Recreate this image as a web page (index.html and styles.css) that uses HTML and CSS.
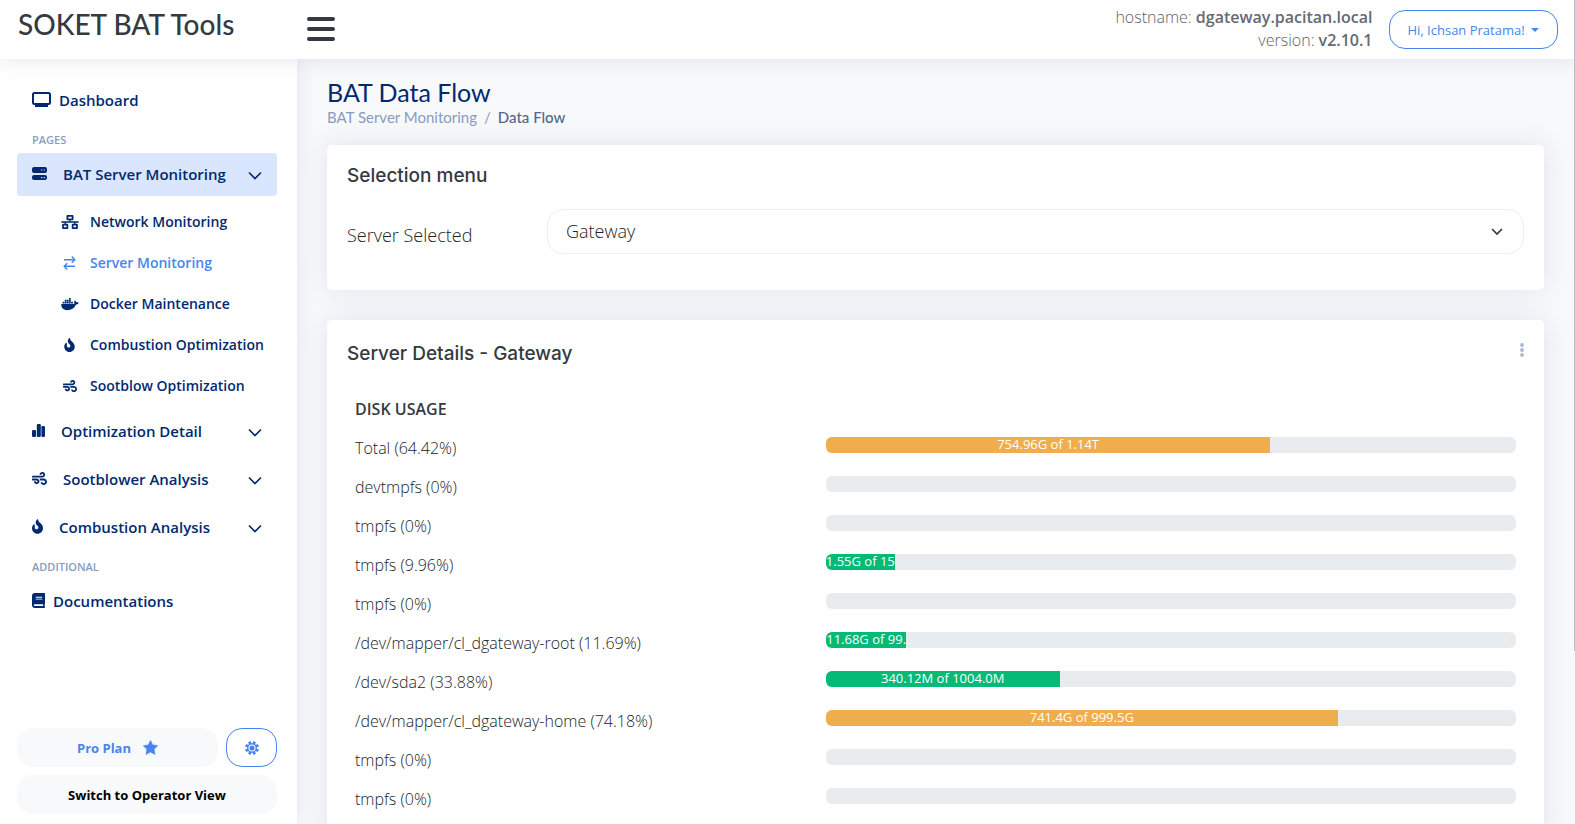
FILE: index.html
```html
<!DOCTYPE html>
<html lang="en">
<head>
<meta charset="utf-8">
<meta name="viewport" content="width=device-width, initial-scale=1">
<title>SOKET BAT Tools</title>
<link rel="stylesheet" href="styles.css">
</head>
<body>
<svg class="sprite" aria-hidden="true">
  <symbol id="chevron" viewBox="0 0 14 9"><path d="M1 1.500l6 6 6-6" fill="none" stroke="currentColor" stroke-width="1.700"/></symbol>
  <symbol id="fire" viewBox="0 0 384 512"><path d="M216 23.86c0-23.8-30.65-32.77-44.15-13.04C48 191.85 224 200 224 288c0 35.63-29.11 64.46-64.85 63.99-35.17-.45-63.15-29.77-63.15-64.94v-85.51c0-21.7-26.47-32.23-41.43-16.5C27.8 213.16 0 261.33 0 320c0 105.87 86.13 192 192 192s192-86.13 192-192c0-170.29-168-193-168-296.14z"/></symbol>
  <symbol id="wind" viewBox="0 0 512 512"><path d="M156.7 256H16c-8.8 0-16 7.2-16 16v32c0 8.8 7.2 16 16 16h142.2c15.9 0 30.8 10.9 33.4 26.6 3.3 20-12.1 37.4-31.6 37.4-14.1 0-26.1-9.2-30.4-21.9-2.1-6.3-8.6-10.1-15.2-10.1H81.6c-9.8 0-17.7 8.8-15.9 18.4 8.6 44.1 47.6 77.6 94.2 77.6 57.1 0 102.7-50.1 95.2-108.6C249 291 205.4 256 156.7 256zM16 224h336c59.7 0 106.8-54.8 93.8-116.7-7.6-36.2-36.9-65.5-73.1-73.1-55.4-11.6-105.1 24.9-114.9 75.5-1.9 9.6 6.1 18.3 15.8 18.3h32.8c6.7 0 13.1-3.8 15.2-10.1C325.9 105.2 337.9 96 352 96c19.4 0 34.9 17.4 31.6 37.4-2.6 15.7-17.4 26.6-33.4 26.6H16c-8.8 0-16 7.2-16 16v32c0 8.8 7.2 16 16 16zm384 32H243.7c19.3 16.6 33.2 38.8 39.8 64H400c26.5 0 48 21.5 48 48s-21.5 48-48 48c-17.9 0-33.3-9.9-41.6-24.4-2.9-5-8.7-7.6-14.5-7.6h-33.8c-10.9 0-19 10.8-15.3 21.1 17.8 50.6 70.5 84.8 129.4 72.3 41.2-8.7 75.1-41.6 84.7-82.7C526 321.5 470.5 256 400 256z"/></symbol>
</svg>

<header class="topbar">
  <div class="brand">SOKET BAT Tools</div>
  <button class="burger" type="button" aria-label="Toggle sidebar">
    <svg width="28" height="24" viewBox="0 0 28 24"><path d="M2 2h24M2 12h24M2 22h24" stroke="currentColor" stroke-width="4" stroke-linecap="round"/></svg>
  </button>
  <div class="host">
    <div>hostname: <b>dgateway.pacitan.local</b></div>
    <div>version: <b>v2.10.1</b></div>
  </div>
  <button class="user" type="button">Hi, Ichsan Pratama! <span class="caret"></span></button>
</header>

<div class="layout">
  <aside class="sidebar">
    <nav class="nav">
      <a class="item near" href="#"><svg width="19" height="16" viewBox="0 0 19 16"><rect x="1" y="1" width="17" height="11" rx="1.5" fill="none" stroke="currentColor" stroke-width="2"/><path d="M3 14h13" stroke="currentColor" stroke-width="2"/></svg><span>Dashboard</span></a>
      <h2 class="group">PAGES</h2>
      <a class="item active" href="#"><svg width="15" height="14" viewBox="0 0 15 14"><path fill-rule="evenodd" d="M2 0h11a2 2 0 0 1 2 2v2a2 2 0 0 1-2 2H2a2 2 0 0 1-2-2V2a2 2 0 0 1 2-2zm7 2.4v1.2h1.2V2.4zm2.6 0v1.2h1.2V2.4zM2 8h11a2 2 0 0 1 2 2v1a2 2 0 0 1-2 2H2a2 2 0 0 1-2-2v-1a2 2 0 0 1 2-2zm7 2v1.2h1.2V10zm2.6 0v1.2h1.2V10z"/></svg><span>BAT Server Monitoring</span><svg class="chev" width="14" height="9"><use href="#chevron"/></svg></a>
      <div class="sub">
        <a href="#"><i><svg width="18" height="14" viewBox="0 0 640 512"><path d="M640 264v-16c0-8.840-7.160-16-16-16H344v-40h72c17.670 0 32-14.330 32-32V32c0-17.670-14.330-32-32-32H224c-17.670 0-32 14.330-32 32v128c0 17.670 14.330 32 32 32h72v40H16c-8.840 0-16 7.160-16 16v16c0 8.840 7.160 16 16 16h104v40H64c-17.670 0-32 14.330-32 32v128c0 17.670 14.330 32 32 32h160c17.670 0 32-14.330 32-32V352c0-17.670-14.330-32-32-32h-56v-40h304v40h-56c-17.670 0-32 14.330-32 32v128c0 17.670 14.330 32 32 32h160c17.670 0 32-14.330 32-32V352c0-17.670-14.330-32-32-32h-56v-40h104c8.840 0 16-7.160 16-16zM256 128V64h128v64H256zm-64 320H96v-64h96v64zm352 0h-96v-64h96v64z"/></svg></i>Network Monitoring</a>
        <a class="current" href="#"><i><svg width="13" height="14" viewBox="0 0 13 14" fill="none" stroke="currentColor" stroke-width="1.4"><path fill="none" d="M1 3.700h11M8.800.6l3 3.100-3 3.100M12 10.300H1M4.200 7.200l-3 3.100 3 3.100"/></svg></i>Server Monitoring</a>
        <a href="#"><i><svg width="18" height="14" viewBox="0 0 640 512"><path d="M349.900 236.300h-66.100v-59.400h66.100v59.400zm0-204.300h-66.100v60.700h66.100V32zm78.200 144.800H362v59.400h66.100v-59.400zm-156.300-72.100h-66.100v60.100h66.100v-60.100zm78.100 0h-66.100v60.100h66.100v-60.100zm276.800 100c-14.400-9.700-47.600-13.200-73.100-8.400-3.300-24-16.700-44.900-41.100-63.700l-14-9.300-9.300 14c-18.400 27.800-23.400 73.600-3.700 103.800-8.700 4.700-25.800 11.100-48.400 10.700H2.400c-8.700 50.800 5.800 116.800 44 162.100 37.100 43.900 92.700 66.200 165.400 66.200 157.400 0 273.900-72.500 328.400-204.200 21.400.4 67.600.1 91.300-45.200 1.500-2.500 6.600-13.200 8.500-17.100l-13.300-8.900zm-511.100-27.900h-66v59.400h66.100v-59.400zm78.100 0h-66.100v59.400h66.100v-59.400zm78.100 0h-66.100v59.400h66.100v-59.400zm-78.100-72.100h-66.100v60.100h66.100v-60.100z"/></svg></i>Docker Maintenance</a>
        <a href="#"><i><svg width="11" height="14"><use href="#fire"/></svg></i>Combustion Optimization</a>
        <a href="#"><i><svg width="14" height="14"><use href="#wind"/></svg></i>Sootblow Optimization</a>
      </div>
      <a class="item" href="#"><svg width="13" height="14" viewBox="0 0 13 14"><rect y="6" width="4" height="7" rx="1.200"/><rect x="4.800" width="4" height="13" rx="1.200"/><rect x="9.400" y="2" width="3.600" height="11" rx="1.200"/></svg><span>Optimization Detail</span><svg class="chev" width="14" height="9"><use href="#chevron"/></svg></a>
      <a class="item" href="#"><svg width="15" height="15"><use href="#wind"/></svg><span>Sootblower Analysis</span><svg class="chev" width="14" height="9"><use href="#chevron"/></svg></a>
      <a class="item" href="#"><svg width="11" height="15"><use href="#fire"/></svg><span>Combustion Analysis</span><svg class="chev" width="14" height="9"><use href="#chevron"/></svg></a>
      <h2 class="group">ADDITIONAL</h2>
      <a class="item near" href="#"><svg width="13" height="15" viewBox="0 0 448 512"><path d="M448 360V24c0-13.300-10.700-24-24-24H96C43 0 0 43 0 96v320c0 53 43 96 96 96h328c13.300 0 24-10.700 24-24v-16c0-7.500-3.500-14.300-8.900-18.700-4.200-15.400-4.200-59.300 0-74.700 5.400-4.300 8.900-11.100 8.900-18.600zM128 134c0-3.300 2.700-6 6-6h212c3.300 0 6 2.700 6 6v20c0 3.300-2.700 6-6 6H134c-3.300 0-6-2.700-6-6v-20zm0 64c0-3.300 2.700-6 6-6h212c3.300 0 6 2.700 6 6v20c0 3.300-2.700 6-6 6H134c-3.300 0-6-2.700-6-6v-20zm253.400 250H96c-17.700 0-32-14.300-32-32 0-17.600 14.400-32 32-32h285.400c-1.900 17.100-1.900 46.900 0 64z"/></svg><span>Documentations</span></a>
    </nav>
    <div class="actions">
      <button class="pill plan" type="button">Pro Plan <svg width="15" height="15" viewBox="0 0 15 15"><path stroke="currentColor" stroke-width=".6" stroke-linejoin="round" d="M7.500.4l2.200 4.500 5 .8-3.600 3.500.9 5.200-4.500-2.400L3 14.400l.9-5.200L.3 5.700l5-.8z"/></svg></button>
      <button class="pill gear" type="button" aria-label="Settings"><svg width="14" height="14" viewBox="0 0 16 16"><g stroke="currentColor" stroke-width="3"><path d="M4.900.7l6.200 14.600M11.100.7L4.900 15.300M.7 4.900l14.600 6.200M.7 11.100l14.600-6.200"/></g><circle cx="8" cy="8" r="5.500"/><circle cx="8" cy="8" r="3.500" fill="none" stroke="#fff" stroke-width="1.200"/></svg></button>
      <button class="pill operator" type="button">Switch to Operator View</button>
    </div>
  </aside>

  <main class="main">
    <h1 class="title">BAT Data Flow</h1>
    <nav class="crumbs" aria-label="Breadcrumb"><a href="#">BAT Server Monitoring</a><span>/</span><b>Data Flow</b></nav>

    <section class="card selection">
      <h2>Selection menu</h2>
      <div class="field">
        <label for="server">Server Selected</label>
        <div class="select">
          <select id="server"><option>Gateway</option></select>
          <svg width="12" height="8" viewBox="0 0 12 8"><path d="M1.500 1.500L6 6l4.500-4.500" fill="none" stroke="#343a40" stroke-width="1.700" stroke-linecap="round"/></svg>
        </div>
      </div>
    </section>

    <section class="card details">
      <div class="card-head">
        <h2>Server Details - Gateway</h2>
        <button class="more" type="button" aria-label="More"><svg width="4" height="14" viewBox="0 0 4 14"><circle cx="2" cy="2" r="1.900"/><circle cx="2" cy="7" r="1.900"/><circle cx="2" cy="12" r="1.900"/></svg></button>
      </div>
      <table class="disks">
        <colgroup><col class="name-col"><col></colgroup>
        <thead><tr><th colspan="2">DISK USAGE</th></tr></thead>
        <tbody>
          <tr><td>Total (64.42%)</td><td><div class="bar"><div class="warn" style="width:64.42%">754.96G of 1.14T</div></div></td></tr>
          <tr><td>devtmpfs (0%)</td><td><div class="bar"></div></td></tr>
          <tr><td>tmpfs (0%)</td><td><div class="bar"></div></td></tr>
          <tr><td>tmpfs (9.96%)</td><td><div class="bar"><div class="ok" style="width:9.96%">1.55G of 15</div></div></td></tr>
          <tr><td>tmpfs (0%)</td><td><div class="bar"></div></td></tr>
          <tr><td>/dev/mapper/cl_dgateway-root (11.69%)</td><td><div class="bar"><div class="ok" style="width:11.69%">11.68G of 99.</div></div></td></tr>
          <tr><td>/dev/sda2 (33.88%)</td><td><div class="bar"><div class="ok" style="width:33.88%">340.12M of 1004.0M</div></div></td></tr>
          <tr><td>/dev/mapper/cl_dgateway-home (74.18%)</td><td><div class="bar"><div class="warn" style="width:74.18%">741.4G of 999.5G</div></div></td></tr>
          <tr><td>tmpfs (0%)</td><td><div class="bar"></div></td></tr>
          <tr><td>tmpfs (0%)</td><td><div class="bar"></div></td></tr>
        </tbody>
      </table>
    </section>
  </main>
</div>
<div class="scroll-thumb"></div>
</body>
</html>
```
FILE: styles.css
```css
* { box-sizing: border-box; }
body {
  margin: 0;
  height: 100vh;
  overflow: hidden;
  display: flex;
  flex-direction: column;
  font-family: "Open Sans", "Noto Sans", sans-serif;
  color: #343a40;
  background: #f8f9fb;
}
h1, h2 { margin: 0; font-weight: 400; }
a { color: inherit; text-decoration: none; }
button { font: inherit; background: none; border: 0; padding: 0; cursor: pointer; }
svg { fill: currentColor; flex: none; }
.sprite { display: none; }

.topbar {
  flex: none;
  display: flex;
  align-items: center;
  height: 59px;
  padding: 0 17px 0 18px;
  background: #fff;
  box-shadow: 0 2px 20px rgba(1, 41, 112, .1);
  z-index: 2;
}
.brand { width: 289px; padding-bottom: 12px; font-family: Lato, sans-serif; font-size: 28px; line-height: 34px; font-weight: 500; }
.burger { display: flex; padding-bottom: 2px; color: #343a40; }
.host { margin-left: auto; margin-right: 16px; padding-bottom: 2px; text-align: right; font-size: 16px; line-height: 23px; color: #5c636a; font-weight: 300; }
.host b { color: #666a70; font-weight: 600; }
.user {
  height: 39px;
  padding: 0 18px;
  border: 1px solid #4785ec;
  border-radius: 16px;
  color: #4785ec;
  font-size: 13px;
}
.caret { display: inline-block; margin-left: 3px; vertical-align: 3px; border: 4px solid transparent; border-top-color: currentColor; border-bottom: 0; }

.layout { flex: 1; min-height: 0; display: flex; }
.sidebar {
  flex: none;
  width: 297px;
  padding: 20px 20px 10px 17px;
  display: flex;
  flex-direction: column;
  background: #fff;
  box-shadow: 0 0 20px rgba(1, 41, 112, .1);
  color: #012970;
  z-index: 1;
}
.item {
  display: flex;
  align-items: center;
  gap: 16px;
  height: 43px;
  margin-bottom: 5px;
  padding: 0 15px 2px;
  border-radius: 4px;
  font-size: 15px;
  font-weight: 600;
}
.near { gap: 8px; margin-bottom: 0; }
.active { background: #dae6fd; }
.chev { margin-left: auto; margin-top: 3px; }
.group { margin: 9px 15px 4px; font-size: 11px; line-height: 18px; font-weight: 600; color: #899bbd; }
.sub { margin-bottom: 4px; }
.sub a { display: flex; align-items: center; gap: 12px; height: 41px; padding-left: 44px; font-size: 14px; font-weight: 600; }
.sub i { display: flex; justify-content: center; width: 17px; }
.sub .current { color: #4785ec; }
.actions { margin-top: auto; display: grid; grid-template-columns: 1fr 51px; gap: 8px; }
.pill { display: flex; align-items: center; justify-content: center; height: 39px; border-radius: 16px; background: #f8f9fb; font-size: 13px; font-weight: 700; color: #000; }
.plan { gap: 12px; color: #4785ec; }
.gear { border: 1px solid #4785ec; background: #fff; color: #4785ec; }
.operator { grid-column: 1 / -1; }

.main { flex: 1; min-width: 0; padding: 19px 31px 0 30px; }
.title { font-family: Lato, sans-serif; font-size: 25px; line-height: 28px; color: #012970; }
.crumbs { display: flex; gap: 7px; margin-bottom: 17px; font-family: Lato, sans-serif; font-size: 15px; line-height: 22px; color: #899bbd; }
.crumbs b { font-weight: 500; color: #51678f; }
.card { margin-bottom: 30px; padding: 20px; border-radius: 5px; background: #fff; box-shadow: 0 0 30px rgba(1, 41, 112, .1); }
.card h2 { font-family: Inter, sans-serif; font-size: 19px; line-height: 22px; font-weight: 500; }
.selection { padding-bottom: 36px; }
.field { display: flex; align-items: center; margin-top: 22px; font-size: 18px; color: #212529; }
.field label { width: 200px; padding-top: 6px; font-weight: 300; }
.select { flex: 1; position: relative; display: flex; }
.select select {
  appearance: none;
  width: 100%;
  height: 45px;
  padding: 0 18px 2px;
  border: 1px solid #eceef0;
  border-radius: 16px;
  background: #fff;
  font: inherit;
  font-weight: 300;
  color: inherit;
}
.select svg { position: absolute; right: 21px; top: 19px; pointer-events: none; }
.card-head { display: flex; justify-content: space-between; padding-top: 3px; }
.more { align-self: flex-start; display: flex; color: #aab7cf; }
.disks { width: 100%; margin-top: 25px; border-collapse: collapse; table-layout: fixed; font-size: 16px; line-height: 23px; }
.name-col { width: 40%; }
.disks th { padding: 8px; text-align: left; font-weight: 600; }
.disks td { padding: 8px; vertical-align: top; font-weight: 300; color: #212529; }
.bar { display: flex; height: 16px; border-radius: 6px; background: #e9ecef; overflow: hidden; }
.bar div { overflow: hidden; white-space: nowrap; text-align: center; font-size: 13px; line-height: 15px; font-weight: 400; color: #fff; }
.warn { background: #f0ad4e; }
.ok { background: #05b976; }
.scroll-thumb { position: fixed; top: 0; right: 0; width: 1px; height: 79vh; background: #b7c2d0; z-index: 3; }
```
